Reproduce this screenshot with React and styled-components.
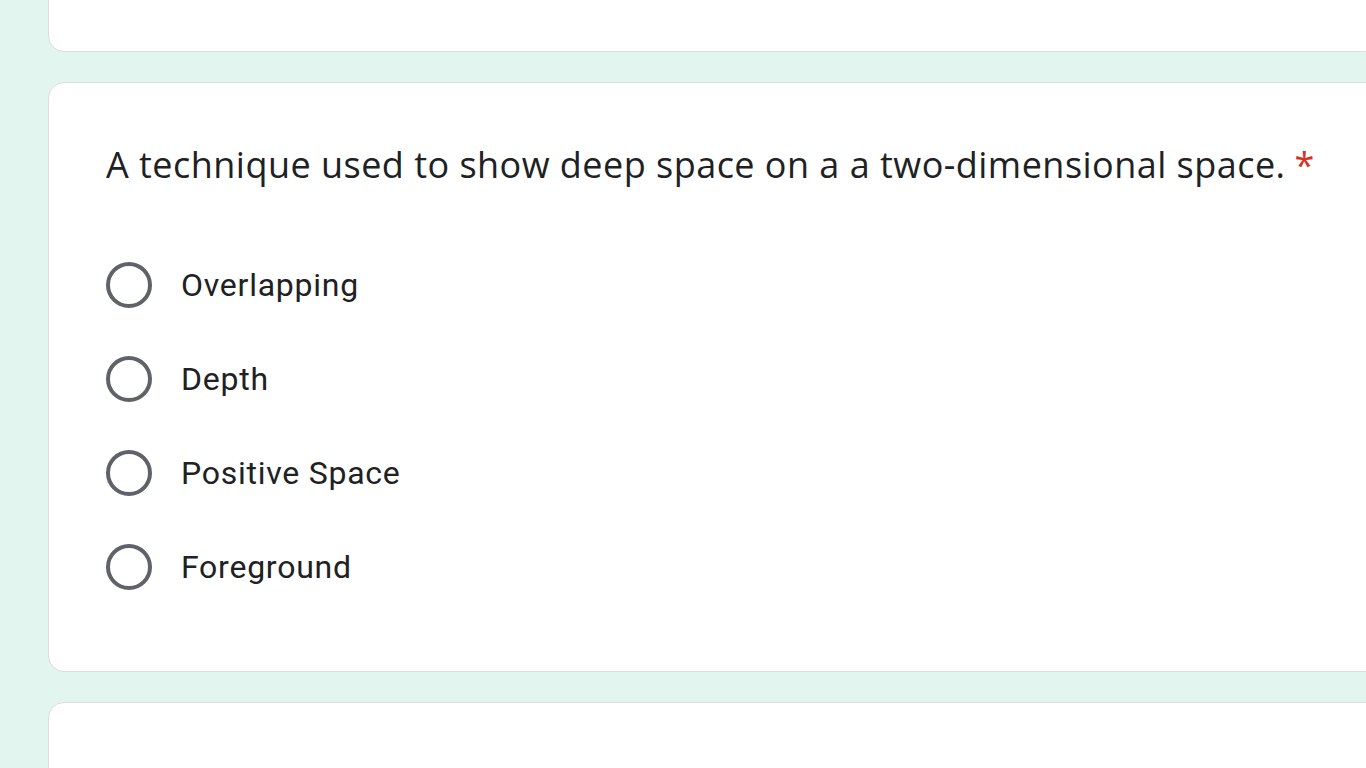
import React from 'react';
import styled, { createGlobalStyle } from 'styled-components';

const GlobalStyle = createGlobalStyle`
  html, body {
    margin: 0;
    padding: 0;
    background: #e3f5ef;
    overflow: hidden;
  }
`;

const Page = styled.div`
  display: flex;
  flex-direction: column;
  gap: 30px;
  padding-left: 48px;
  margin-top: -100px;
  width: 1420px;
`;

const Card = styled.div`
  background: #fff;
  border: 1px solid #dadce0;
  border-radius: 16px;
  box-sizing: border-box;
  height: ${(p) => p.h}px;
`;

const QuestionCard = styled(Card)`
  padding: 60px 57px 0;
`;

const Title = styled.div`
  font-family: 'Open Sans', 'Noto Sans', sans-serif;
  font-size: 36px;
  line-height: 44px;
  color: #202124;
  letter-spacing: 0.47px;
  white-space: nowrap;
`;

const Star = styled.span`
  color: #d93025;
  margin-left: 9px;
`;

const Options = styled.div`
  display: flex;
  flex-direction: column;
  gap: 48px;
  margin-top: 75px;
`;

const Option = styled.label`
  display: flex;
  align-items: center;
  height: 46px;
`;

const Radio = styled.span`
  width: 46px;
  height: 46px;
  border: 4px solid #5f6368;
  border-radius: 50%;
  box-sizing: border-box;
  flex-shrink: 0;
`;

const Label = styled.span`
  margin-left: 29px;
  font-family: Roboto, 'Liberation Sans', sans-serif;
  font-size: 32px;
  color: #202124;
  letter-spacing: 0.75px;
`;

const options = ['Overlapping', 'Depth', 'Positive Space', 'Foreground'];

export default function App() {
  return (
    <>
      <GlobalStyle />
      <Page>
        <Card h={152} />
        <QuestionCard h={590}>
          <Title>
            A technique used to show deep space on a a two-dimensional space.
            <Star>*</Star>
          </Title>
          <Options>
            {options.map((o) => (
              <Option key={o}>
                <Radio />
                <Label>{o}</Label>
              </Option>
            ))}
          </Options>
        </QuestionCard>
        <Card h={200} />
      </Page>
    </>
  );
}
